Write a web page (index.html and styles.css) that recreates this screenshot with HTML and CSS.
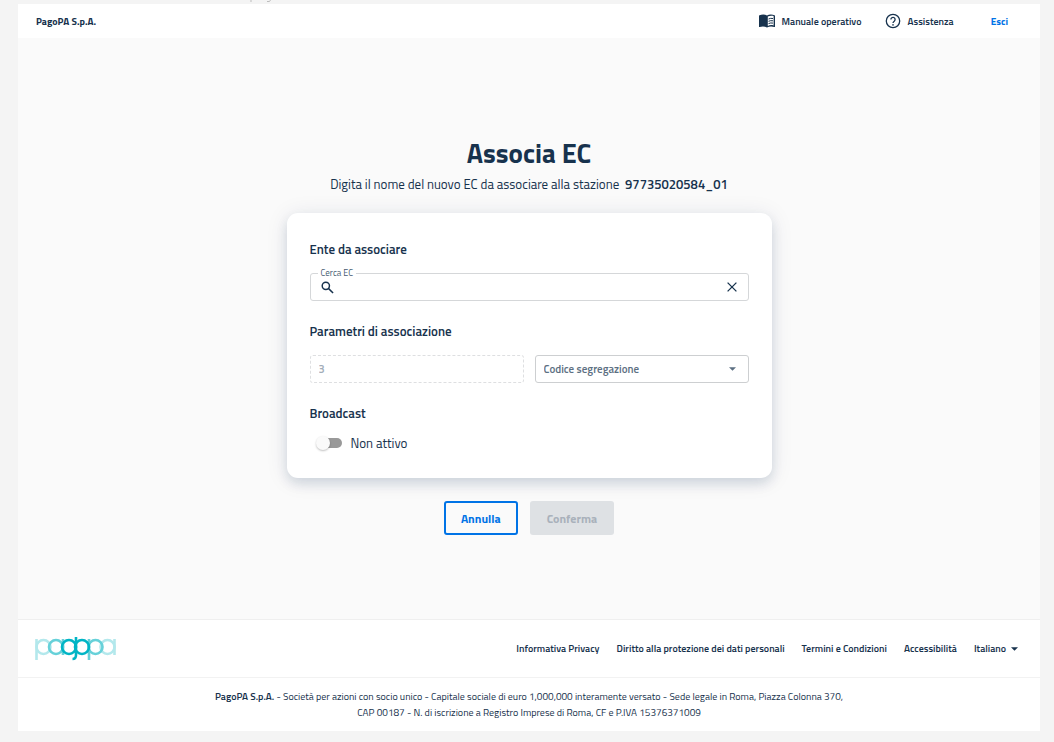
FILE: index.html
```html
<!DOCTYPE html>
<html lang="it">
<head>
<meta charset="utf-8">
<meta name="viewport" content="width=device-width, initial-scale=1">
<title>Associa EC</title>
<link rel="stylesheet" href="styles.css">
</head>
<body>
<svg class="edge-marks" viewBox="0 0 24 4" aria-hidden="true"><path d="M2 0V2M18 1.500H20.500L21.500 0" fill="none" stroke="#bdbdbd"/></svg>
<div class="page">
  <header class="topbar">
    <strong class="topbar-brand">PagoPA S.p.A.</strong>
    <nav class="topbar-nav">
      <a class="topbar-link" href="#manuale">
        <svg class="icon-book" viewBox="0 0 18 14" aria-hidden="true"><path fill="currentColor" d="M1.500 1.300C3.800.2 7 .2 9 1.500C11 .2 14.200.2 16.500 1.300Q17 1.500 17 2V12.700Q17 13.200 16.400 13C14 12.200 11.200 12.200 9 13.500C6.800 12.200 4 12.200 1.600 13Q1 13.200 1 12.700V2Q1 1.500 1.500 1.300Z"/><path fill="#fff" d="M9.800 2.600C11.700 1.600 13.800 1.600 15.600 2.100V11.400C13.500 10.900 11.500 11 9.800 11.900Z"/><path fill="none" stroke="currentColor" d="M10.500 5Q12.500 4 15 4.500M10.500 7.300Q12.500 6.300 15 6.800M10.500 9.600Q12.500 8.600 15 9.100"/></svg>
        Manuale operativo
      </a>
      <a class="topbar-link" href="#assistenza">
        <svg class="icon-help" viewBox="0 0 16 16" aria-hidden="true"><g fill="none" stroke="currentColor" stroke-width="1.300"><circle cx="8" cy="8" r="6.700"/><path d="M5.900 6.500A2.100 2.100 0 1 1 9.400 8C8.500 8.700 8 9 8 10.100"/></g><circle cx="8" cy="11.900" r=".8" fill="currentColor"/></svg>
        Assistenza
      </a>
      <a class="topbar-exit" href="#esci">Esci</a>
    </nav>
  </header>

  <main class="content">
    <h1 class="title">Associa EC</h1>
    <p class="subtitle">Digita il nome del nuovo EC da associare alla stazione <strong class="station">97735020584_01</strong></p>

    <form class="form">
      <div class="card">
        <section class="group">
          <h2 class="group-title">Ente da associare</h2>
          <div class="search">
            <label class="search-label" for="ec">Cerca EC</label>
            <svg class="icon-search" viewBox="0 0 14 14" aria-hidden="true"><g fill="none" stroke="currentColor" stroke-width="1.600"><circle cx="5.200" cy="5.200" r="3.900"/><path d="M8.200 8.200L13 13"/></g></svg>
            <input class="search-input" id="ec" type="text">
            <button class="search-clear" type="button" aria-label="Cancella">
              <svg class="icon-clear" viewBox="0 0 10 10" aria-hidden="true"><path d="M.6.6L9.400 9.400M9.400.6L.6 9.400" fill="none" stroke="currentColor" stroke-width="1.300"/></svg>
            </button>
          </div>
        </section>
        <section class="group">
          <h2 class="group-title">Parametri di associazione</h2>
          <div class="params">
            <input class="field field-disabled" type="text" value="3" aria-label="Codice" disabled>
            <div class="select-wrap">
              <select class="field field-select" aria-label="Codice segregazione"><option>Codice segregazione</option></select>
              <svg class="caret" viewBox="0 0 8 4" aria-hidden="true"><path fill="currentColor" d="M0 0H8L4 4Z"/></svg>
            </div>
          </div>
        </section>
        <section class="group">
          <h2 class="group-title">Broadcast</h2>
          <label class="switch"><input class="switch-input" type="checkbox" role="switch">Non attivo</label>
        </section>
      </div>
      <div class="actions">
        <button class="btn btn-outline" type="button">Annulla</button>
        <button class="btn btn-disabled" type="submit" disabled>Conferma</button>
      </div>
    </form>
  </main>

  <footer class="footer">
    <div class="footer-main">
      <a class="logo-link" href="#home" aria-label="PagoPA">
        <svg class="logo" viewBox="0 0 82 24" aria-hidden="true">
          <g fill="none" stroke-width="2.600">
            <g stroke="#b3e8ec"><path d="M1.500 2V23M79.500 2V18"/><circle cx="8.500" cy="10" r="7"/><circle cx="72.500" cy="10" r="7"/></g>
            <g stroke="#66d1d9"><path d="M28 2V18M54 2V23"/><circle cx="21" cy="10" r="7"/><circle cx="60.500" cy="10" r="7"/></g>
            <g stroke="#00b5c5"><circle cx="34" cy="10" r="7"/><circle cx="47" cy="10" r="7"/><path d="M41 0V18Q41 22 37.500 22"/></g>
          </g>
        </svg>
      </a>
      <nav class="footer-nav">
        <a class="footer-link" href="#privacy">Informativa Privacy</a>
        <a class="footer-link" href="#diritto">Diritto alla protezione dei dati personali</a>
        <a class="footer-link" href="#termini">Termini e Condizioni</a>
        <a class="footer-link" href="#accessibilita">Accessibilità</a>
        <button class="language" type="button">Italiano <svg class="caret-small" viewBox="0 0 8 4" aria-hidden="true"><path fill="currentColor" d="M0 0H8L4 4Z"/></svg></button>
      </nav>
    </div>
    <p class="legal"><strong class="legal-name">PagoPA S.p.A.</strong> - Società per azioni con socio unico - Capitale sociale di euro 1,000,000 interamente versato - Sede legale in Roma, Piazza Colonna 370,<br>CAP 00187 - N. di iscrizione a Registro Imprese di Roma, CF e P.IVA 15376371009</p>
  </footer>
</div>
</body>
</html>
```
FILE: styles.css
```css
* { box-sizing: border-box; }

body {
  margin: 0;
  padding: 0 14px 11px 18px;
  min-height: 100vh;
  display: flex;
  flex-direction: column;
  background: #f4f4f4;
  color: #17324d;
  font-family: "Titillium Web", "Noto Sans", sans-serif;
  font-size: 13px;
}

a { color: inherit; text-decoration: none; }
button, input, select { font: inherit; color: inherit; }
svg { display: block; flex: none; }

.edge-marks { width: 24px; height: 4px; margin-left: 231px; }
.page { flex: 1; display: flex; flex-direction: column; background: #fafafa; }

.topbar {
  display: flex;
  align-items: center;
  justify-content: space-between;
  height: 34px;
  padding: 0 32px 0 18px;
  background: #fff;
  font-size: 10px;
}
.topbar-brand { font-weight: 700; }
.topbar-nav { display: flex; align-items: center; gap: 24px; font-weight: 600; }
.topbar-link { display: flex; align-items: center; gap: 6px; }
.topbar-exit { margin-left: 13px; color: #0073e6; font-weight: 700; }
.icon-book { width: 18px; height: 14px; }
.icon-help { width: 16px; height: 16px; }

.content {
  flex: 1;
  display: flex;
  flex-direction: column;
  align-items: center;
  justify-content: center;
  padding: 12px 16px 0;
}
.title { margin: 0; font-size: 27px; line-height: 38px; font-weight: 700; }
.subtitle { margin: 0 0 17px; line-height: 24px; }
.station { margin-left: 3px; font-weight: 600; }

.form { width: 100%; max-width: 485px; }
.card {
  display: flex;
  flex-direction: column;
  gap: 20px;
  padding: 26px 23px;
  border-radius: 11px;
  background: #fff;
  box-shadow: 0 6px 12px rgba(0, 43, 85, .12), 0 2px 22px rgba(0, 43, 85, .1);
}
.group-title { margin: 0 0 14px; font-size: 13px; line-height: 20px; font-weight: 600; }

.search {
  position: relative;
  display: flex;
  align-items: center;
  height: 28px;
  padding: 0 10px;
  border: 1px solid #d5d7d9;
  border-radius: 3px;
}
.search-label {
  position: absolute;
  top: -7px;
  left: 7px;
  padding: 0 3px;
  background: #fff;
  color: #455b71;
  font-size: 9px;
  line-height: 12px;
}
.search-input { flex: 1; min-width: 0; height: 24px; border: 0; outline: 0; background: none; }
.search-clear { padding: 0 1px; border: 0; background: none; }
.icon-search { width: 13px; height: 13px; }
.icon-clear { width: 10px; height: 10px; }

.params { display: grid; grid-template-columns: 1fr 1fr; gap: 11px; }
.field {
  width: 100%;
  height: 28px;
  padding: 0 8px;
  border: 1px solid #cdcfd1;
  border-radius: 3px;
  background: #fff;
  font-size: 11px;
  font-weight: 600;
}
.field-disabled { border: 1px dashed #dedfe1; color: #a2adb8; }
.select-wrap { position: relative; color: #5c6f82; }
.field-select { appearance: none; display: block; }
.caret { position: absolute; top: 12px; right: 13px; width: 7px; height: 4px; }

.switch { display: flex; align-items: center; gap: 9px; padding-left: 6px; line-height: 18px; }
.group:last-child .group-title { margin-bottom: 11px; }
.switch-input {
  appearance: none;
  position: relative;
  width: 26px;
  height: 14px;
  margin: 0;
}
.switch-input::before {
  content: "";
  position: absolute;
  inset: 2px 0 2px 2px;
  border-radius: 5px;
  background: #999;
}
.switch-input::after {
  content: "";
  position: absolute;
  top: 0;
  left: 0;
  width: 14px;
  height: 14px;
  border-radius: 50%;
  background: #fafafa;
  box-shadow: 0 1px 2px rgba(0, 0, 0, .25);
}

.actions { display: flex; justify-content: center; gap: 12px; margin-top: 23px; }
.btn { height: 34px; padding: 0 15px; border: 2px solid transparent; border-radius: 3px; font-size: 12px; font-weight: 700; }
.btn-outline { border-color: #0073e6; background: none; color: #0073e6; }
.btn-disabled { background: #dee1e4; color: #a9b1bb; }

.footer { background: #fff; border-top: 1px solid #efefef; }
.footer-main {
  display: flex;
  align-items: center;
  justify-content: space-between;
  height: 58px;
  padding: 0 22px 0 17px;
  border-bottom: 1px solid #f2f2f2;
}
.logo { width: 82px; height: 24px; }
.footer-nav { display: flex; align-items: center; gap: 17px; font-size: 10px; font-weight: 600; }
.language { display: flex; align-items: center; gap: 5px; padding: 0; border: 0; background: none; }
.caret-small { width: 7px; height: 4px; }
.legal { margin: 0; padding: 11px 16px 10px; text-align: center; font-size: 10px; line-height: 16px; }
.legal-name { font-weight: 600; }
```
